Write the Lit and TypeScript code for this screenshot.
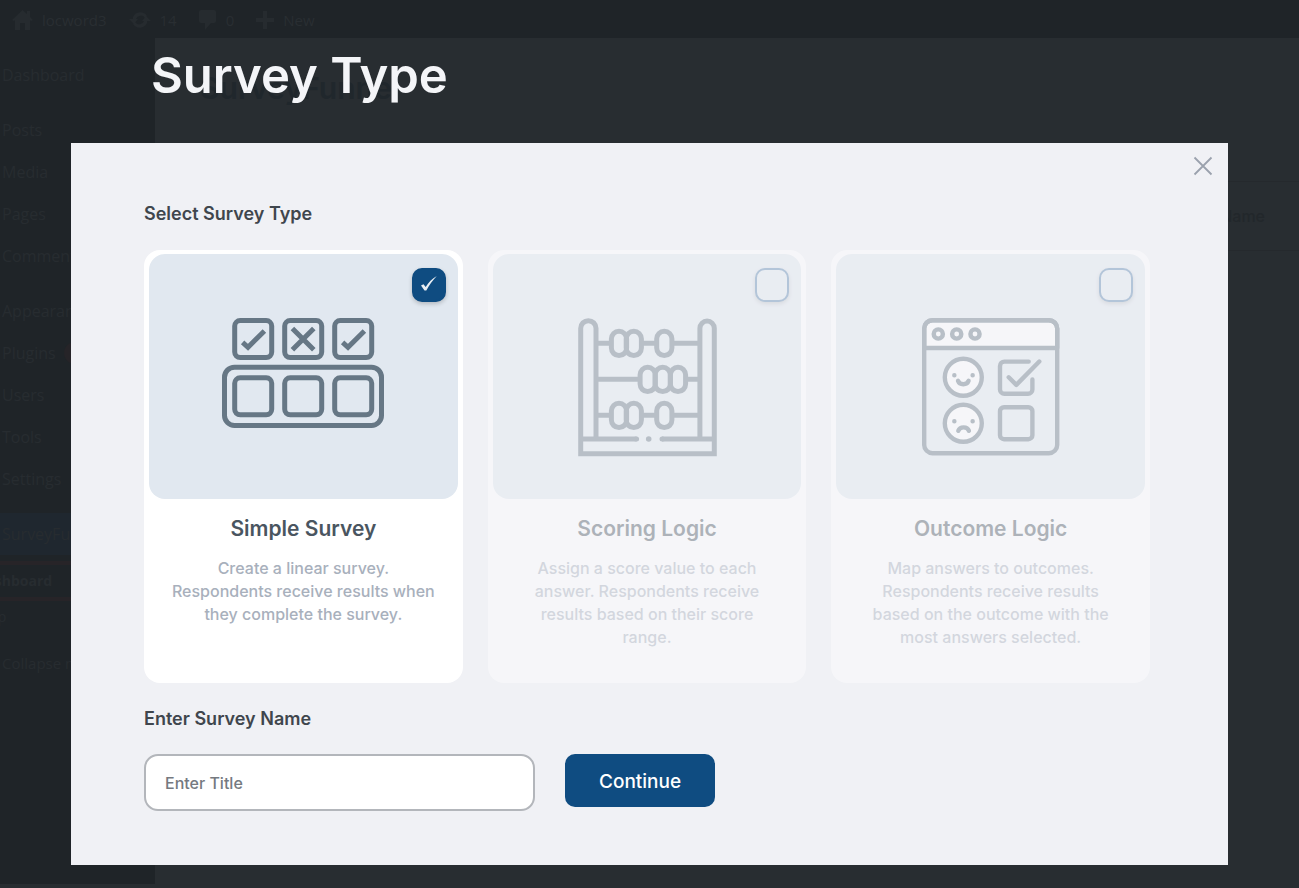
import { LitElement, html, svg, css } from "lit";
import { customElement, state } from "lit/decorators.js";
import { classMap } from "lit/directives/class-map.js";

const simpleIcon = html`<svg class="icon" width="162" height="110" viewBox="0 0 162 110" fill="none" stroke="#667785" stroke-width="5" aria-hidden="true">
  ${[10, 60, 110].map(
    (x) => svg`<rect x=${x + 2.7} y="2.6" width="37" height="37" rx="5.5" />
      <rect x=${x + 2.7} y="59.8" width="37" height="37" rx="5.5" />`,
  )}
  <rect x="2.5" y="49.2" width="157" height="58.3" rx="10" />
  <path d="M20.6 24.4l5.4 4.9 16.4-16.3M120.6 24.4l5.4 4.9 16.4-16.3" />
  <path d="M70.4 10.4l21.4 21.4M91.8 10.4L70.4 31.8" />
</svg>`;

const bead = (x: number, y: number) => svg`<rect x=${x - 7.6} y=${y - 12.2} width="15.2" height="24.4" rx="7.6" />`;

const scoringIcon = html`<svg class="icon" width="140" height="139" viewBox="-1 0 140 139" fill="none" stroke="#667785" stroke-width="5" aria-hidden="true">
  <path d="M18 121V10.3a7.6 7.6 0 0 0-15.3 0v125.4h133.6V10.3a7.2 7.2 0 0 0-14.4 0V121" />
  <path d="M2.7 121H58.6M84 121h52.3" />
  <path d="M58 121h.6M84 121h.6" stroke-linecap="round" />
  <circle cx="70.7" cy="121" r="2.8" fill="#667785" stroke="none" />
  <path d="M18 25.3h15.4M63.3 25.3h15.4M94 25.3h28M18 61.3h44M107.6 61.3H122M18 97.3h15.4M63.3 97.3h15.4M94 97.3h28" />
  ${[41, 55.8, 86.3].map((x) => [bead(x, 25.4), bead(x, 97.4)])}
  ${[69.7, 84.7, 100].map((x) => bead(x, 61.4))}
</svg>`;

const outcomeIcon = html`<svg class="icon" width="138" height="138" viewBox="0 0 138 138" fill="none" stroke="#667785" stroke-width="4.4" stroke-linecap="round" stroke-linejoin="round" aria-hidden="true">
  <path d="M2.2 30V10.5a8.3 8.3 0 0 1 8.3-8.3h116.4a8.3 8.3 0 0 1 8.3 8.3V30z" fill="#fff" />
  <rect x="2.2" y="2.2" width="133" height="133" rx="8.3" />
  ${[16.3, 34.7, 53].map((x) => svg`<circle cx=${x} cy="16" r="4.6" fill="#fff" />`)}
  ${[59.3, 105.3].map(
    (y) => svg`<circle cx="41.3" cy=${y} r="18.5" fill="#fff" />
      <path d="M32.3 ${y - 2}h.1M50.6 ${y - 2}h.1" />`,
  )}
  <path d="M36 62.8c1.6 4.6 9 4.6 10.6 0M36.3 112.8c1.6-4.6 9-4.6 10.6 0" />
  <path d="M106.7 43.6H82.4a4.4 4.4 0 0 0-4.4 4.4v23.4a4.4 4.4 0 0 0 4.4 4.4H106a4.4 4.4 0 0 0 4.4-4.4V61.4" />
  <path d="M86.7 59.3l7.6 7.6 23-23.4" />
  <rect x="78" y="89.2" width="32.4" height="32" rx="4" />
</svg>`;

const surveyTypes = [
  {
    id: "simple",
    name: "Simple Survey",
    icon: simpleIcon,
    text: "Create a linear survey.\nRespondents receive results when they complete the survey.",
  },
  {
    id: "scoring",
    name: "Scoring Logic",
    icon: scoringIcon,
    text: "Assign a score value to each answer. Respondents receive results based on their score\nrange.",
  },
  {
    id: "outcome",
    name: "Outcome Logic",
    icon: outcomeIcon,
    text: "Map answers to outcomes.\nRespondents receive results\nbased on the outcome with the\nmost answers selected.",
  },
];

@customElement("admin-backdrop")
class AdminBackdrop extends LitElement {
  static styles = css`
    :host {
      display: flex;
      flex-direction: column;
      min-height: 100vh;
      box-sizing: border-box;
      padding-bottom: 4px;
      background: #282d31;
      color: #272c30;
      font: 16px/22px "Open Sans", "Noto Sans", sans-serif;
    }
    .bar {
      display: flex;
      align-items: center;
      gap: 22px;
      height: 38px;
      padding: 2px 12px 0;
      box-sizing: border-box;
      background: #1f2428;
      font-size: 15px;
      color: #292e32;
    }
    .entry {
      display: flex;
      align-items: center;
      gap: 9px;
    }
    .entry svg {
      fill: #262b2f;
    }
    .body {
      display: flex;
      flex: 1;
    }
    .side {
      flex: none;
      box-sizing: border-box;
      width: 193px;
      margin-left: -38px;
      padding-top: 16px;
      background: #1f2428;
    }
    .item {
      display: block;
      height: 42px;
      box-sizing: border-box;
      padding: 10px 0 10px 40px;
      white-space: nowrap;
    }
    .spaced {
      margin-top: 13px;
    }
    .current {
      background: #1f272f;
    }
    .sub {
      display: flex;
      flex-direction: column;
      margin-top: 6px;
      font-size: 14px;
      line-height: 20px;
    }
    .sub span {
      padding: 6px 14px;
    }
    .sub .active {
      border: solid #272428;
      border-width: 4px 0;
      font-weight: 700;
    }
    .collapse {
      margin-top: 9px;
      font-size: 15px;
    }
    .badge {
      display: inline-block;
      width: 22px;
      height: 22px;
      margin-left: 4px;
      border-radius: 11px;
      background: #262428;
      vertical-align: top;
    }
    .main {
      flex: 1;
      min-width: 0;
    }
    .brand {
      padding: 34px 45px 77px;
      color: #20272c;
      font: 600 30px/32px Inter, sans-serif;
    }
    .row {
      display: flex;
      justify-content: flex-end;
      padding: 22px 34px;
      border: solid #25292d;
      border-width: 1px 0;
      color: #22272b;
      font: 500 16px/24px Inter, sans-serif;
    }
  `;

  render() {
    return html`
      <header class="bar">
        <span class="entry">
          <svg width="21" height="20" viewBox="0 0 21 20"><path d="M10.5 0L0 10l2 1 1-1v10h5v-7h5v7h5V10l1 1 2-1-3-3V1h-3v3z" /></svg>
          locword3
        </span>
        <span class="entry">
          <svg width="22" height="18" viewBox="0 0 22 18"><path d="M4 6a8 8 0 0 1 14-1l-2 2a5 5 0 0 0-9 1h2l-4 5-5-5h4zM18 12A8 8 0 0 1 4 13l2-2a5 5 0 0 0 9-1h-2l4-5 5 5h-4z" /></svg>
          14
        </span>
        <span class="entry">
          <svg width="18" height="20" viewBox="0 0 18 20"><path d="M2 0h13a2 2 0 0 1 2 2v9a2 2 0 0 1-2 2h-3l-6 7v-7H2a2 2 0 0 1-2-2V2a2 2 0 0 1 2-2z" /></svg>
          0
        </span>
        <span class="entry">
          <svg width="18" height="18" viewBox="0 0 18 18"><path d="M7 0h4v7h7v4h-7v7H7v-7H0V7h7z" /></svg>
          New
        </span>
      </header>
      <div class="body">
        <nav class="side">
          <span class="item">Dashboard</span>
          <span class="item spaced">Posts</span>
          <span class="item">Media</span>
          <span class="item">Pages</span>
          <span class="item">Comments</span>
          <span class="item spaced">Appearance</span>
          <span class="item">Plugins <span class="badge"></span></span>
          <span class="item">Users</span>
          <span class="item">Tools</span>
          <span class="item">Settings</span>
          <span class="item spaced current">SurveyFunnel</span>
          <div class="sub">
            <span class="active">Dashboard</span>
            <span>Help</span>
          </div>
          <span class="item collapse">Collapse menu</span>
        </nav>
        <div class="main">
          <div class="brand">SurveyFunnel</div>
          <div class="row">Name</div>
        </div>
      </div>
    `;
  }
}

@customElement("app-root")
class AppRoot extends LitElement {
  @state() selected = "simple";

  static styles = css`
    :host {
      display: block;
      position: relative;
      min-height: 100vh;
      overflow: hidden;
      font-family: Inter, sans-serif;
    }
    .overlay {
      position: absolute;
      inset: 0;
      padding: 44px 71px 0;
    }
    .title {
      margin: 0 0 35px;
      padding-left: 80px;
      color: #f4f5f8;
      font-size: 49px;
      font-weight: 600;
      line-height: 64px;
    }
    .modal {
      position: relative;
      padding: 58px 78px 54px 73px;
      background: #f0f1f5;
    }
    .close {
      position: absolute;
      top: 9px;
      right: 11px;
      display: grid;
      place-items: center;
      width: 28px;
      height: 28px;
      padding: 0;
      border: 0;
      background: none;
      cursor: pointer;
    }
    .legend {
      display: block;
      padding: 0;
      color: #3f464d;
      font-size: 18px;
      font-weight: 600;
      line-height: 26px;
    }
    .types {
      margin: 0;
      padding: 0;
      border: 0;
      min-width: 0;
    }
    .cards {
      display: grid;
      grid-template-columns: repeat(3, 1fr);
      gap: 25px;
      margin: 23px 0;
    }
    .card {
      position: relative;
      box-sizing: border-box;
      padding: 4px 5px 34px;
      border-radius: 16px;
      background: #fff;
      text-align: center;
      cursor: pointer;
    }
    .dimmed {
      opacity: 0.4;
    }
    .art {
      display: block;
      height: 245px;
      box-sizing: border-box;
      padding-top: 64px;
      border-radius: 16px;
      background: #e1e8f0;
    }
    .icon {
      display: block;
      margin: 0 auto;
    }
    .check {
      position: absolute;
      top: 18px;
      right: 17px;
      appearance: none;
      box-sizing: border-box;
      width: 34px;
      height: 34px;
      margin: 0;
      border: 2px solid #5a86b0;
      border-radius: 10px;
      background: #e1e8f0;
      box-shadow: 0 2px 4px #0003;
      cursor: pointer;
    }
    .check:checked {
      border-color: #0f4c81;
      background: #0f4c81;
    }
    .tick {
      position: absolute;
      top: 26px;
      right: 25px;
      pointer-events: none;
    }
    .name {
      display: block;
      margin: 16px 0 14px;
      color: #4a5560;
      font-size: 21px;
      font-weight: 600;
      line-height: 28px;
    }
    .text {
      display: block;
      min-height: 92px;
      padding: 0 18px;
      color: #a8b0bc;
      font-size: 16px;
      font-weight: 500;
      line-height: 23px;
      white-space: pre-line;
    }
    .form {
      display: flex;
      align-items: flex-start;
      gap: 30px;
      margin-top: 22px;
    }
    .field {
      box-sizing: border-box;
      width: 391px;
      height: 57px;
      padding: 0 19px;
      border: 2px solid #b3b6bb;
      border-radius: 14px;
      background: #fff;
      color: #3f464d;
      font: 500 16px/24px Inter, sans-serif;
    }
    .field::placeholder {
      color: #757980;
      opacity: 1;
    }
    .submit {
      height: 53px;
      padding: 2px 34px 0;
      border: 0;
      border-radius: 10px;
      background: #0f4c81;
      color: #fff;
      font: 500 19px/26px Inter, sans-serif;
      cursor: pointer;
    }
  `;

  render() {
    return html`
      <admin-backdrop aria-hidden="true"></admin-backdrop>
      <div class="overlay">
        <h1 class="title">Survey Type</h1>
        <form class="modal" @submit=${(e: Event) => e.preventDefault()}>
          <button class="close" type="button" aria-label="Close">
            <svg width="20" height="20" viewBox="0 0 20 20" stroke="#9aa1ad" stroke-width="1.8"><path d="M1.5 1.5l17 17M18.5 1.5l-17 17" /></svg>
          </button>
          <fieldset class="types">
            <legend class="legend">Select Survey Type</legend>
            <div class="cards">
              ${surveyTypes.map(
                (t) => html`
                  <label class=${classMap({ card: true, dimmed: t.id !== this.selected })}>
                    <span class="art">${t.icon}</span>
                    <input
                      class="check"
                      type="radio"
                      name="type"
                      .checked=${t.id === this.selected}
                      @change=${() => (this.selected = t.id)}
                    />
                    ${t.id === this.selected
                      ? html`<svg class="tick" width="18" height="18" viewBox="0 0 18 18"><path d="M1 9.5l2.5-1.200 2.200 2.800C8.500 6.500 12 2.500 16.800 0 12.500 4.500 9 9.500 6.300 14.500L4.500 14.500z" fill="#e9eef4" /></svg>`
                      : null}
                    <span class="name">${t.name}</span>
                    <span class="text">${t.text}</span>
                  </label>
                `,
              )}
            </div>
          </fieldset>
          <label class="legend" for="survey-name">Enter Survey Name</label>
          <div class="form">
            <input class="field" id="survey-name" type="text" placeholder="Enter Title" />
            <button class="submit" type="submit">Continue</button>
          </div>
        </form>
      </div>
    `;
  }
}
